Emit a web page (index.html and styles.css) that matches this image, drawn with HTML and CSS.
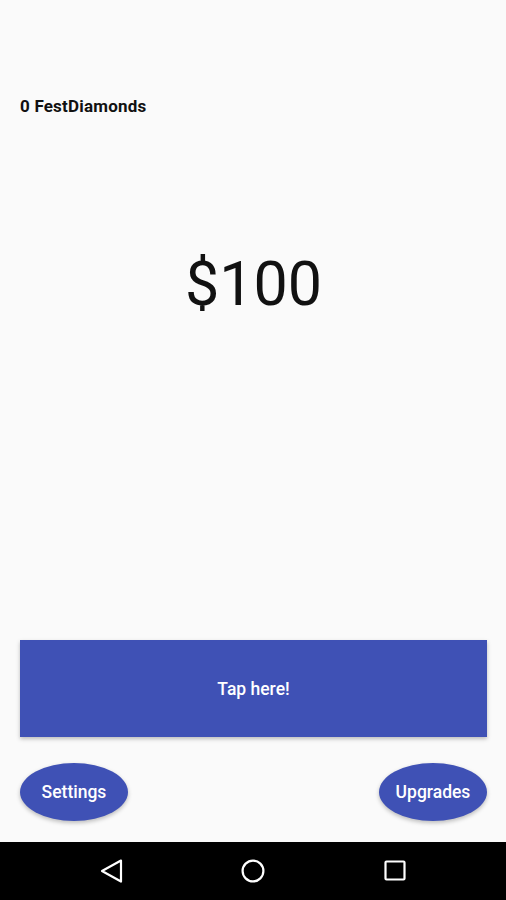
FILE: index.html
```html
<!DOCTYPE html>
<html lang="en">
<head>
    <meta charset="UTF-8">
    <meta name="viewport" content="width=device-width, initial-scale=1.0">
    <title>FestDiamonds</title>
    <link rel="stylesheet" href="styles.css">
</head>
<body>
    <div class="screen">
        <div class="app">
            <p class="diamonds">0 FestDiamonds</p>
            <h1 class="money">$100</h1>
            <div class="spacer"></div>
            <button class="tap-btn">Tap here!</button>
            <div class="bottom-row">
                <button class="oval-btn">Settings</button>
                <button class="oval-btn">Upgrades</button>
            </div>
        </div>
        <nav class="navbar">
            <svg width="24" height="24" viewBox="0 0 24 24">
                <path d="M22 1.5 L3 12 L22 22.5 Z" fill="none" stroke="#fff" stroke-width="2.2" stroke-linejoin="round"/>
            </svg>
            <svg width="24" height="24" viewBox="0 0 24 24">
                <circle cx="12" cy="12" r="10.4" fill="none" stroke="#fff" stroke-width="2.2"/>
            </svg>
            <svg width="24" height="24" viewBox="0 0 24 24">
                <rect x="2.5" y="2.5" width="19" height="18" rx="1" fill="none" stroke="#fff" stroke-width="2.2"/>
            </svg>
        </nav>
    </div>
</body>
</html>
```

FILE: styles.css
```css
* {
    margin: 0;
    padding: 0;
    box-sizing: border-box;
}

body {
    font-family: Roboto, 'Liberation Sans', sans-serif;
    background: #fafafa;
    width: 506px;
    height: 900px;
    overflow: hidden;
}

.screen {
    height: 900px;
    display: flex;
    flex-direction: column;
}

.app {
    flex: 1;
    display: flex;
    flex-direction: column;
    padding: 96px 19px 21px 20px;
}

.diamonds {
    font-size: 17px;
    font-weight: 700;
    color: #111;
    line-height: 20px;
    letter-spacing: 0.2px;
}

.money {
    margin-top: 131px;
    font-size: 61px;
    font-weight: 400;
    color: #111;
    text-align: center;
    line-height: 74px;
}

.spacer {
    flex: 1;
}

button {
    font-family: Roboto, 'Liberation Sans', sans-serif;
    border: none;
    background: #3f51b5;
    color: #fff;
    font-size: 17.5px;
    font-weight: 500;
    cursor: pointer;
}

.tap-btn {
    height: 97px;
    width: 100%;
    box-shadow: 0 2px 4px rgba(0, 0, 0, 0.25);
}

.bottom-row {
    display: flex;
    justify-content: space-between;
    margin-top: 26px;
}

.oval-btn {
    width: 108px;
    height: 58px;
    border-radius: 50%;
    box-shadow: 0 2px 4px rgba(0, 0, 0, 0.25);
}

.navbar {
    height: 58px;
    background: #000;
    display: flex;
    justify-content: center;
    align-items: center;
    gap: 118px;
}
```
